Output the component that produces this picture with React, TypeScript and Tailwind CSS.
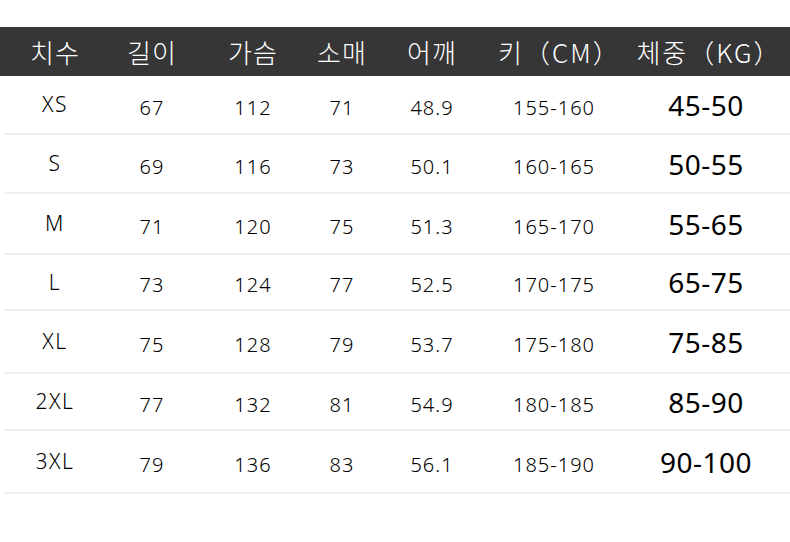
import React from "react";

const headers = ["치수", "길이", "가슴", "소매", "어깨", "키（CM）", "체중（KG）"];
const rows: { h: number; c: string[] }[] = [
  { h: 59, c: ["XS", "67", "112", "71", "48.9", "155-160", "45-50"] },
  { h: 59, c: ["S", "69", "116", "73", "50.1", "160-165", "50-55"] },
  { h: 61, c: ["M", "71", "120", "75", "51.3", "165-170", "55-65"] },
  { h: 56, c: ["L", "73", "124", "77", "52.5", "170-175", "65-75"] },
  { h: 63, c: ["XL", "75", "128", "79", "53.7", "175-180", "75-85"] },
  { h: 57, c: ["2XL", "77", "132", "81", "54.9", "180-185", "85-90"] },
  { h: 63, c: ["3XL", "79", "136", "83", "56.1", "185-190", "90-100"] },
];

const cols = "grid grid-cols-[110px_84px_118px_60px_120px_124px_174px]";

export default function App() {
  return (
    <div className="w-[790px] h-[542px] bg-white overflow-hidden" style={{ fontFamily: '"Noto Sans", "Noto Sans CJK KR", sans-serif' }}>
      <div className="h-[27px]" />
      <div className={`${cols} h-[49px] bg-[#363636] items-center text-white text-[26px] leading-none font-light`} style={{ fontFamily: '"Noto Sans CJK KR", sans-serif' }}>
        {headers.map((t, i) => (
          <div
            key={i}
            className={`text-center whitespace-nowrap ${i >= 5 ? "tracking-[2px]" : "tracking-[1px]"} ${i === 5 ? "pl-[6px]" : ""} ${i === 6 ? "pl-[12px]" : ""}`}
          >
            {t}
          </div>
        ))}
      </div>
      {rows.map((r, ri) => (
        <div key={ri} className="flex flex-col" style={{ height: r.h }}>
          <div className={`${cols} flex-1 items-center text-black`}>
            {r.c.map((t, i) => (
              <div
                key={i}
                className={
                  i === 6
                    ? "text-center text-[28px] text-black leading-none tracking-[0.5px] pl-[6px]"
                    : i === 0
                    ? "text-center text-[21px] font-light leading-none tracking-[1.5px]"
                    : "text-center text-[20px] font-light leading-none tracking-[1px] translate-y-[3px]"
                }
              >
                {t}
              </div>
            ))}
          </div>
          <div className="ml-[4px] h-[2px] bg-[#f0f0f0]" />
        </div>
      ))}
    </div>
  );
}
